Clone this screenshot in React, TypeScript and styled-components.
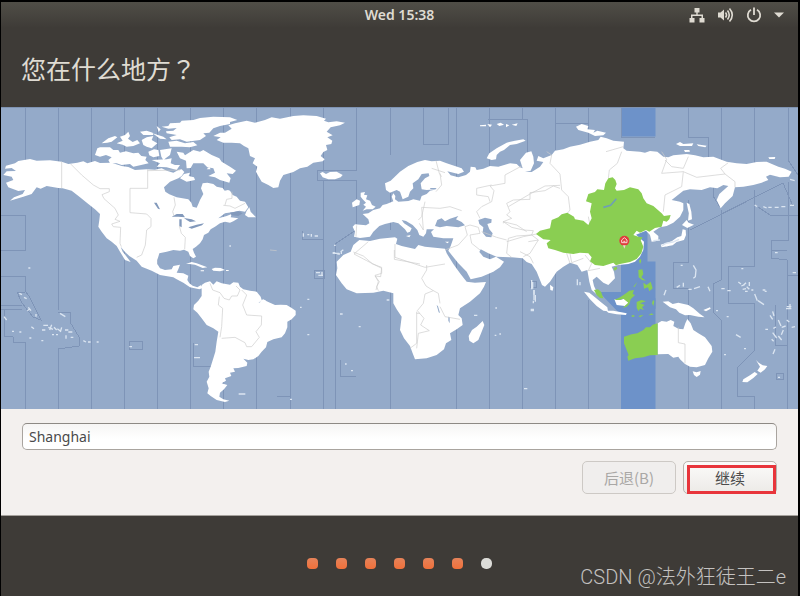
import React, { useState } from "react";
import styled, { createGlobalStyle } from "styled-components";

const GlobalStyle = createGlobalStyle`
  * { box-sizing: border-box; }
  body { margin: 0; background: #000; }
`;

const uiFont = `"Noto Sans", "Noto Sans CJK SC", sans-serif`;

const Screen = styled.div`
  min-height: 100vh;
  display: flex;
  flex-direction: column;
  border: solid #000;
  border-width: 2px 2px 0 1px;
  background: #3e3b37;
  font-family: ${uiFont};
`;

const TopBar = styled.header`
  display: grid;
  grid-template-columns: 1fr auto 1fr;
  align-items: center;
  height: 26px;
  padding: 0 14px;
  background: linear-gradient(#504e47, #3e3b37);
`;

const Clock = styled.time`
  grid-column: 2;
  color: #dfdbd2;
  font: 600 14px/20px ${uiFont};
`;

const Tray = styled.div`
  justify-self: end;
  display: flex;
  align-items: center;
  gap: 12px;
`;

const TrayButton = styled.button`
  display: flex;
  padding: 0;
  border: 0;
  background: none;
  color: #dfdbd2;
`;

const Header = styled.div`
  padding: 21px 20px 19px;
`;

const Title = styled.h1`
  margin: 0;
  color: #dfdbd2;
  font: 400 25px/39px "Noto Sans CJK SC", sans-serif;
`;

const CentredMark = styled.span`
  font-family: "Noto Sans CJK TC", sans-serif;
`;

const WorldMap = styled.svg`
  display: block;
  width: 100%;
  background: #94aac9;
`;

const Panel = styled.form`
  padding: 14px 21px 21px;
  background: #f3f0ee;
  border-bottom: 1px solid #a5a19c;
`;

const CityInput = styled.input`
  display: block;
  width: 100%;
  height: 27px;
  padding: 0 6px;
  border: 1px solid #a9a49f;
  border-top-color: #8d8984;
  border-radius: 5px;
  outline: 0;
  background: linear-gradient(#f6f5f4, #fff 60%);
  color: #4a4a4a;
  font: 400 14px/20px ${uiFont};
`;

const Actions = styled.div`
  display: flex;
  justify-content: flex-end;
  gap: 7px;
  margin-top: 11px;
`;

const ActionButton = styled.button<{ $marked?: boolean }>`
  position: relative;
  width: 94px;
  height: 33px;
  padding: 0;
  border: 1px solid ${(p) => (p.$marked ? "#b9b3ad" : "#cdc9c5")};
  border-radius: 5px;
  background: ${(p) => (p.$marked ? "linear-gradient(#fcfbfa, #eceae7)" : "#f0eeed")};
  color: ${(p) => (p.$marked ? "#4c4c4c" : "#a9a7a5")};
  font: 400 15px/22px "Noto Sans CJK SC", sans-serif;
`;

const Marker = styled.span`
  position: absolute;
  inset: 3px 0 -1px 3px;
  border: 3px solid #e8353b;
`;

const Footer = styled.footer`
  position: relative;
  flex: 1;
  min-height: 80px;
  padding-top: 42px;
`;

const Steps = styled.ol`
  display: flex;
  justify-content: center;
  gap: 18px;
  margin: 0;
  padding: 0;
  list-style: none;
`;

const Step = styled.li<{ $last: boolean }>`
  width: 11px;
  height: 11px;
  border-radius: ${(p) => (p.$last ? "5px" : "4px")};
  background: ${(p) => (p.$last ? "#dcdcd8" : "linear-gradient(#e5835a, #f0703a)")};
`;

const Watermark = styled.span`
  position: absolute;
  right: 12px;
  bottom: 4px;
  color: #c4c2c0;
  font: 300 20px/30px Roboto, "Noto Sans CJK SC", sans-serif;
`;

/* Each sheet of the map is drawn on a grid three times finer than the map itself. */
const west = "translate(0 100) scale(.33333)";
const south = "translate(150 250) scale(.33333)";
const north = "translate(200 100) scale(.33333)";
const centre = "translate(330 140) scale(.33333)";
const east = "translate(480 100) scale(.33333)";
const oceania = "translate(520 240) scale(.33333)";
const pacific = "translate(0 250) scale(.33333)";

const zoneLines =
  "M25 107V165M1 215H25V250H1M1 276H25V291L29 296L41 320L33 317L22 303L17 292H25M1 305H22M1 309H22M4 309V336L13 337V342H25V409M58 107V310M58 349V409M91 107V409M124 107V409M157 107V409M190 107V409M223 107V409M256 107V409M290 107V409M323 107V170M323 180V409M356 107V170H317V180H356V230L335 244V409M390 107V155M390 185V230M390 290V409M423 107V144H448V107M456 107V409M489 107V409M488 119H527V165M522 107V120M522 250V409M555 107V150M555 123H588V107M555 240V409M588 107V145M588 300V409M621 107V137H655M688 107V137H708V160M688 200V262H673V288H688V409M721 107V160M721 210V280L713 284V312L721 320V409M754 107V163M754 190V266H728V303H754V351L737 368V396H754V409M788 107V160L798 175M788 182V240H771V258L787 260V409M690 230L783 183L793 206M755 205L770 215H798M771 240V250H787M787 275H798M775 305V345H788M193 343V366H214M340 360V376H356M277 396H291M129 341H142V349H129ZM58 312H70V322L79 337V346L58 349M713 160V196L720 207M302 231V239H323M314 270H324V278H314ZM530 281H536V287H530ZM776 373H783V379H776Z";

const westLand = [
  "M18 197L45 190L55 183L90 177L110 182L150 181L185 185L205 192L232 188L250 184L262 190L285 183L300 189L335 188L365 198L385 201L405 210L440 208L465 209L485 205L500 212L520 218L535 210L545 208L553 216L545 228L535 235L510 245L492 262L496 275L508 283L530 292L565 298L574 308L578 320L590 323L596 310L600 300L610 282L603 265L608 250L622 248L640 252L650 260L668 264L674 272L684 270L690 272L698 285L710 290L720 302L735 305L745 322L735 335L718 332L700 336L675 340L655 355L680 348L695 342L692 352L715 355L700 364L690 368L675 365L660 370L645 380L632 388L625 398L612 405L608 418L600 430L588 440L578 447L582 458L588 470L580 475L570 468L565 455L552 449L540 452L520 450L500 455L478 460L472 480L472 492L480 505L495 510L515 508L520 498L540 494L535 508L530 518L550 520L565 527L562 540L568 550L578 557L592 562L602 556L610 563L598 568L570 562L550 548L530 538L520 532L480 525L455 512L425 500L410 482L388 468L375 456L362 440L368 455L380 470L392 486L375 480L360 455L350 438L335 425L320 415L305 395L295 380L298 360L300 342L285 328L265 312L240 292L215 272L188 265L175 264L140 258L122 266L110 262L95 282L70 290L30 302L42 292L68 282L75 270L55 273L25 262L18 248L40 240L35 230L10 225L20 214L48 213L35 204L15 206Z",
  "M285 165L292 145L300 142L330 142L340 150L355 150L360 158L378 154L400 160L415 158L424 168L440 170L436 180L446 190L420 196L400 200L390 192L365 195L350 190L330 190L325 180L335 172L318 165L300 170Z",
  "M305 130L325 115L345 108L352 112L335 125L322 128ZM350 130L368 122L360 110L375 105L385 95L390 108L384 116L398 126L412 120L420 130L400 138L380 140L368 134Z",
  "M485 80L505 78L510 70L540 68L545 62L580 60L600 54L640 50L690 52L712 60L690 66L690 72L660 78L640 85L628 98L610 100L618 108L600 120L560 125L540 118L515 120L508 112L530 105L500 100L498 94L520 92L530 84L505 86Z",
  "M470 78L482 88L476 96ZM505 125L530 122L555 130L580 126L592 136L570 142L545 140L510 140ZM420 95L440 92L458 98L460 105L430 105ZM425 120L440 112L460 108L455 120L472 130L455 145L440 140L430 135ZM458 100L490 110L500 118L480 116ZM445 155L462 148L475 150L478 168L460 172L448 166ZM480 150L515 145L510 165L490 180L484 170ZM455 180L500 178L515 175L512 190L525 195L540 195L530 210L500 202L470 200L480 190Z",
  "M530 155L550 158L555 166L580 150L600 155L610 150L635 165L658 175L665 185L690 200L708 212L698 222L680 220L692 235L688 248L660 240L645 232L625 228L645 218L640 205L622 202L610 190L580 190L572 204L560 205L558 182L540 175Z",
  "M540 235L552 222L570 218L566 228L582 232L585 240L560 245ZM620 208L628 200L632 208ZM735 345L740 332L748 322L752 335L768 352L745 352Z",
];

const southLand = [
  "M155 105L165 98L180 94L190 104L200 94L215 100L240 104L250 97L265 98L270 110L280 118L300 122L320 125L332 140L335 150L325 160L342 150L360 158L375 165L392 164L410 165L425 174L437 182L437 195L425 208L412 215L412 232L405 250L395 262L370 268L352 276L348 292L335 305L325 318L310 328L295 330L280 326L292 338L290 348L265 354L250 355L255 365L240 368L244 378L225 385L228 392L215 400L232 405L222 418L210 428L208 440L220 448L238 452L225 456L200 450L182 438L172 430L176 415L170 395L178 380L176 365L182 350L190 325L196 305L200 275L205 245L190 235L170 225L155 205L142 188L130 178L132 165L145 152L155 138Z",
  "M108 42L125 36L140 40L172 52L158 54L135 44L118 42ZM185 57L195 53L212 54L225 60L210 64L190 62ZM152 61h10v3h-10ZM228 60h8v3h-8ZM330 152l10 -4l8 4l-6 6h-10Z",
];

const northLand = [
  "M40 108L60 98L75 98L95 86L85 76L105 70L140 62L165 68L195 60L215 52L240 56L280 48L310 46L350 48L378 56L372 62L385 67L410 64L435 68L420 76L392 82L380 95L398 106L382 112L397 122L394 132L378 135L382 150L370 156L362 168L374 178L368 184L340 188L322 200L300 205L280 216L250 225L240 242L235 262L220 264L205 255L185 245L175 228L168 215L172 200L158 190L165 175L150 168L145 145L132 138L120 130L95 128L70 128L50 120L62 112Z",
  "M360 220L368 216L378 222L390 216L410 215L428 225L422 232L405 238L385 238L368 232Z",
  "M482 278L495 276L492 284L502 286L498 298L510 302L516 315L527 320L518 328L500 328L488 332L498 320L490 314L498 308L488 298L482 290ZM456 308L470 298L480 302L478 315L458 322Z",
];

const eurasia =
  "M72 290L75 275L68 260L75 253L108 256L118 250L115 238L98 222L115 220L130 210L150 205L158 195L170 192L190 184L185 170L190 160L196 168L195 178L205 185L235 183L250 178L270 182L275 168L290 162L300 152L320 148L290 150L275 148L272 130L285 115L298 108L296 100L275 102L265 118L248 130L250 145L240 155L235 170L218 178L210 155L200 150L180 158L168 150L165 130L182 122L210 95L235 78L262 66L285 60L305 64L330 62L350 70L395 85L402 95L385 102L352 94L362 106L385 112L408 105L420 95L422 80L436 82L440 90L460 86L480 78L505 80L540 70L560 72L570 82L578 85L570 60L588 38L604 34L610 50L612 70L602 92L585 95L605 96L630 80L640 66L620 62L625 48L640 55L665 45L675 32L700 28L720 20L750 14L780 5L805 0L812 -10L830 -5L850 2L882 5L880 25L890 32L930 35L945 38L960 33L982 35L1000 50L1015 52L1030 46L1070 42L1095 46L1120 52L1150 50L1170 58L1190 65L1220 70L1250 72L1280 66L1310 65L1345 80L1365 86L1385 95L1376 110L1350 112L1320 104L1308 110L1315 120L1295 128L1270 135L1240 140L1215 142L1208 168L1185 190L1172 205L1160 180L1168 162L1195 138L1180 135L1162 145L1140 142L1115 150L1080 148L1060 152L1025 180L1050 185L1060 190L1060 210L1050 230L1030 248L1010 258L990 262L970 275L985 288L985 302L965 305L960 285L948 272L918 284L942 305L940 330L930 350L915 365L895 372L865 375L845 380L852 395L855 415L835 435L820 428L800 410L788 420L792 438L806 468L785 450L778 425L772 390L755 395L742 375L720 368L700 380L680 395L660 425L645 440L636 435L620 395L605 372L590 366L578 355L545 352L500 350L475 340L452 328L448 336L460 350L480 358L498 350L522 365L510 382L490 395L455 410L422 418L410 395L385 370L365 345L355 332L362 318L370 295L340 295L310 290L303 276L312 268L290 268L288 280L280 290L268 285L262 270L248 255L228 243L215 240L222 250L245 265L240 275L232 278L225 268L205 250L190 246L165 252L148 258L130 275L120 290L90 294Z";

const centreLand = [
  eurasia,
  "M88 300L120 303L150 296L195 292L202 296L198 312L215 318L255 327L265 315L285 320L345 326L350 340L370 372L390 400L410 425L435 428L468 426L462 440L450 460L420 485L390 505L385 525L395 535L398 555L380 568L360 580L364 600L348 610L342 628L320 645L290 655L255 658L248 640L240 618L222 595L210 570L215 530L200 508L190 490L190 460L160 452L130 458L80 460L50 448L35 430L18 405L22 385L20 365L40 345L62 335L70 315Z",
  "M458 543L463 555L455 575L445 600L430 610L418 602L416 588L426 570L440 560ZM228 288L242 285L238 292ZM345 305h12l-4 5Z",
];

const eastLand = [
  "M20 175L28 160L50 145L80 128L105 122L130 118L137 122L110 132L90 135L72 150L60 155L50 165L48 178L35 180Z",
  "M288 80L305 72L325 78L322 88L345 90L340 98L352 92L378 98L370 106L345 108L325 98L295 90ZM588 132L600 126L610 132L640 130L636 138L600 138ZM650 133L680 137L676 142L655 138ZM612 150L628 150L630 155L615 156ZM865 172L886 171L884 177L868 177ZM0 76l18 -2v5H0ZM22 72l14 2l-6 8ZM50 72l12 -4l10 6l-14 4ZM78 72l10 4l-10 6ZM95 74l18 -4l-4 8Z",
  "M620 308L628 312L634 335L636 358L624 362L626 340ZM606 375L620 360L626 368L642 374L622 384ZM608 388L617 390L618 405L612 420L590 426L578 436L545 442L542 434L575 424L592 412L604 408ZM555 432l12 0l-6 8Z",
];

const oceaniaLand = [
  "M413 250L425 243L440 245L452 240L463 245L460 258L475 266L490 268L496 250L502 237L512 250L520 270L535 280L555 292L575 318L577 335L565 355L555 375L530 382L510 380L495 372L480 358L475 350L460 353L445 342L413 343Z",
  "M518 394L530 397L542 393L540 404L530 411L522 405ZM428 185L445 184L458 192L475 188L505 195L520 205L540 222L554 232L535 230L510 225L495 226L478 218L468 208L450 202L440 194ZM550 210l20 -8l2 4l-14 8ZM708 360L716 368L728 376L742 378L735 388L722 398L712 392L720 380ZM704 396L713 402L700 414L682 427L667 426L670 418L690 406Z",
  "M192 155L208 158L225 172L245 188L262 202L264 214L250 212L230 198L210 178ZM258 212L280 212L300 216L320 220L318 225L290 223L265 218ZM283 178L300 180L318 175L325 188L315 198L290 195ZM90 134L100 142L98 152L91 150Z",
];

const chinaZone =
  "M168 402L180 392L210 385L215 360L235 352L245 343L262 338L282 350L285 358L310 362L325 375L335 355L330 335L335 310L318 304L325 282L345 276L352 268L372 270L376 250L385 235L398 232L406 240L410 252L405 265L410 272L432 270L450 262L475 268L485 280L490 295L500 310L520 318L545 340L552 348L572 345L568 358L560 365L550 362L545 380L525 384L508 395L498 390L480 398L470 392L460 405L475 410L488 412L482 420L490 440L484 460L470 477L450 486L420 492L408 496L400 488L370 498L345 495L330 484L335 472L325 460L300 458L280 462L250 458L225 450L205 445L200 430L212 420L190 418Z";

const oceaniaGreen = [
  "M312 290L335 283L352 280L370 270L378 262L390 262L398 254L413 250V345L390 346L370 352L345 355L325 362L322 350L326 345L318 325L312 310Z",
  "M222 150L234 148L243 155L250 175L240 174L230 165ZM283 180L300 172L315 162L328 152L342 150L338 162L345 165L332 178L328 192L320 200L308 204L325 188L310 176L298 180ZM355 90L367 88L370 102L364 112L378 122L366 120L356 112ZM370 128L380 135L392 125L398 145L388 154L384 142L372 146ZM350 186L364 180L378 184L360 190L374 195L366 202L372 210L360 206L356 214L350 204ZM357 62l5 -6l2 8l-4 8ZM280 84l10 -4l2 6l-8 6ZM340 140l12 -14l-8 14ZM355 228l16 -4l-10 8ZM335 226l8 0v4h-8ZM385 226l10 -6l6 4ZM396 190l3 -10l4 4l-3 14Z",
];

const seas = [
  "M315 258L322 240L335 235L345 244L360 236L385 228L378 238L395 246L405 256L385 262L350 258L330 262Z",
  "M445 240L465 233L485 238L484 248L472 252L478 268L488 280L484 292L468 290L458 278L460 262L448 252Z",
  "M320 495l4 4l6 20l-4 -2ZM355 530l4 2v18l-4 -8ZM300 144l20 0l-4 4h-14Z",
];

const lakes =
  "M515 350L530 342L548 342L555 352L535 350ZM538 358L545 358L545 382L538 378ZM552 354L575 358L588 364L570 366L560 360ZM565 382L590 374L612 370L606 376L575 386ZM462 308L470 308L480 328L474 326ZM690 338L715 334L728 340L715 348L695 346Z";

const borders: [string, string][] = [
  [west, "M185 185V265M212 192L245 225L280 255L300 266L328 266V275L306 284L312 296L345 325L355 345L345 358L360 364L335 372L340 380L362 382L360 430L364 440M443 208V265H390V338L440 342L453 355V380L440 390L436 435L425 465L410 472M443 212L540 210M522 292L526 315L518 335L522 348M538 378L544 400L556 412L554 448M670 316L690 318L705 325L735 310M675 315L680 298L696 295V275"],
  [south, "M180 100L188 120L210 128L222 145L238 150L245 138L262 138L270 120L258 108M208 140L205 165L218 175L215 230L210 262M275 120L290 135L278 165L290 195L335 198L334 225L318 245L328 262L305 290L290 290L285 278L255 262L215 265M360 0L380 2M610 6L640 18L668 42L695 52L692 80L675 78L688 95L680 110L685 122M733 0V28L810 42M800 185V280L780 295M800 190h10"],
  [centre, "M80 256L78 290M115 305L72 342L110 362L155 385V400L135 406L145 425L138 450M195 312V352L285 382L345 372M290 375V390L275 415L288 438L310 452L325 460L330 490M310 452L285 462L280 490L262 512L282 535L272 555L298 572L265 580L260 625M330 500L345 530L390 538M265 240L275 230L285 185M268 250L280 270L275 202L330 205L360 200L395 212M330 100L335 135L318 155M318 62L328 100L335 110M305 85L345 98M345 330L385 315L412 285L405 260L420 255L445 262L450 280L420 285L425 310L450 330M575 78L525 105V130L480 138L492 152L485 185L455 200L440 215L450 235M440 145L485 135M440 145V165L475 170L480 185M520 245L545 262L580 270L610 272L605 285L560 288L535 295L530 340L545 352M530 190L550 180L600 178V158L645 152L670 138L690 145M530 190L540 215L530 225L545 235L520 245M520 245V250M455 275L500 292L530 300M605 285L625 300L600 340L580 350"],
  [east, "M200 155L215 165L210 190L240 222L245 270L265 290L270 330L262 340M330 375L325 350M378 155L430 140M385 235L388 210L412 190L425 155M85 320L150 282L195 258L240 256M545 155L560 178L545 220L610 215L605 260L555 285L550 335M555 180L575 200L610 205L625 170M610 215L650 232L735 222L765 245L765 262M735 222L722 205L745 188M80 425L130 410L170 402M70 365L110 375L140 395"],
  [oceania, "M475 262V308L495 312V370M150 40L155 68L190 55M195 45L215 70L205 92M205 92L240 85M0 35L30 50L40 70M25 5L55 0M140 40L150 70"],
];

const specks: [string, string][] = [
  [oceania, "M520 76L528 90L526 110L520 115M482 76h6M438 150l-6 16M470 142l10 -6M490 128v12M505 148h10M522 146l18 -6M564 140l6 14M604 146h10M622 152h10M655 126l8 6M664 138l10 -4M678 128l-8 8M688 126v12M668 148l10 -2M680 140l8 8M675 154h8M664 86h6M694 150h6M704 162l8 20M714 182l18 12M728 150h8M734 154h6M588 212h6M620 230h6M648 284l14 8M672 326h6M612 344h6M750 226l8 12M758 214l4 14M736 268h8M760 265l8 -4M775 240l8 18M785 262l12 -4M790 270l-6 14M758 278l12 16M755 298l6 6M775 288l10 12M800 240l8 6M815 262l10 -2M765 328l-6 14M800 200h14M810 192v14M798 206h16M774 412h6M765 38h8M818 98h10M38 126v20M42 150v14M46 165v20M32 208h10M12 446h10M172 118v18M180 126v10"],
  [oceania, "M400 2L420 0M425 18l12 -8l22 -4l18 -8"],
  [pacific, "M58 130l8 4M72 142l8 4M85 172l8 10M82 182l8 -6M108 200v-8M12 200l8 10M36 244h6M58 246h6M94 230l8 6M88 264h6M126 240h10M124 272h6M130 226h14M145 232l14 6M155 224l-6 16M162 232l8 8M172 236l10 8M185 232l-4 14M168 254h6M156 254h6M195 240h10M205 246h12M198 256v10M212 262h8M180 190l16 10M250 272l8 4M264 276h8M290 276h6M388 290h8M85 54h6"],
  [south, "M134 284h10M132 323h18M498 68h12M505 76h14M516 66v12M472 148h6M450 172h5M570 192h8M626 230h6M472 254h6M585 342h5M603 362h6M420 448h6M266 432h20M548 8h8M562 12h8M574 4v8M710 150h8"],
  [north, "M310 400v10M322 404h6M334 402v8M344 408h10M402 436h5M398 460h20M422 455l8 -6M88 438h5"],
  [centre, "M432 526h10M496 504h5M494 586h5M508 582h5M605 420v28M612 450v30M602 512h10M610 482v8"],
  [east, "M824 315l8 5M850 320l10 4M865 322h10M884 322h12M904 320h12M930 316h12M930 238l14 4"],
];

function Paths({ at, shapes, fill }: { at: string; shapes: string[]; fill: string }) {
  return (
    <g transform={at} fill={fill}>
      {shapes.map((d) => (
        <path key={d} d={d} />
      ))}
    </g>
  );
}

function Map() {
  return (
    <WorldMap viewBox="1 107 797 302" role="img" aria-label="Time zone map">
      <path d="M621 107H655.500V136.500H621ZM627 225H647.500V261.500H655.500V409H621V315L597 290V292H621V262Z" fill="#6d92c9" />
      <path d="M655.500 298l-7 5l7 6Z" fill="#6d92c9" />
      <path d={zoneLines} fill="none" stroke="#7e94b7" strokeWidth="1" shapeRendering="crispEdges" />
      <Paths at={west} shapes={westLand} fill="#fff" />
      <Paths at={south} shapes={southLand} fill="#fff" />
      <Paths at={north} shapes={northLand} fill="#fff" />
      <Paths at={centre} shapes={centreLand} fill="#fff" />
      <Paths at={east} shapes={eastLand} fill="#fff" />
      <Paths at={oceania} shapes={oceaniaLand} fill="#fff" />
      <Paths at={centre} shapes={seas} fill="#94aac9" />
      <Paths at={west} shapes={[lakes]} fill="#8299bb" />
      {borders.map(([at, d]) => (
        <path key={d} transform={at} d={d} fill="none" stroke="#cccccc" strokeWidth="2" />
      ))}
      {specks.map(([at, d]) => (
        <path key={d} transform={at} d={d} fill="none" stroke="#dbe5f1" strokeWidth="4" />
      ))}
      <Paths at={east} shapes={[chinaZone]} fill="#8ace52" />
      <Paths at={oceania} shapes={oceaniaGreen} fill="#8ace52" />
      <g transform={east}>
        <path d="M370 322L392 316L409 296" fill="none" stroke="#6f9fb5" strokeWidth="5" />
        <circle cx="433" cy="422" r="15" fill="#df3d3d" />
        <path d="M429 436h8l-4 10Z" fill="#f6d6d0" />
        <path d="M425 428V420L433 413L441 420V428Z" fill="none" stroke="#fbd5d5" strokeWidth="3" />
        <path d="M430 424h6" stroke="#fbd5d5" strokeWidth="3" />
      </g>
      <path d="M1 107.500H798" stroke="#7f93b2" strokeWidth="1" />
    </WorldMap>
  );
}

export default function App() {
  const [city, setCity] = useState("Shanghai");
  return (
    <>
      <GlobalStyle />
      <Screen>
        <TopBar>
          <Clock>Wed 15:38</Clock>
          <Tray>
            <TrayButton aria-label="Network">
              <svg width="16" height="16" viewBox="0 0 16 16" fill="currentColor">
                <path d="M5.500 1h5v4.500H8.700V7.500H14V11h1.500v4.500h-5V11h2V9h-9v2h2v4.500h-5V11H2V7.500h5.300v-2H5.500Z" />
              </svg>
            </TrayButton>
            <TrayButton aria-label="Volume">
              <svg width="17" height="16" viewBox="0 0 17 16" fill="none" stroke="currentColor" strokeWidth="1.600">
                <path d="M1 5.500h2.500L7 2.500v11l-3.500 -3H1Z" fill="currentColor" stroke="none" />
                <path d="M8.500 5.500q2 2.500 0 5M10.500 3.500q3.500 4.500 0 9M12.500 1.500q5.500 6.500 0 13" />
              </svg>
            </TrayButton>
            <TrayButton aria-label="Power">
              <svg width="16" height="16" viewBox="0 0 16 16" fill="none" stroke="currentColor" strokeWidth="1.800">
                <path d="M5 2.800A6.200 6.200 0 1 0 11 2.800M8 0.500V8" />
              </svg>
            </TrayButton>
            <TrayButton aria-label="System menu">
              <svg width="10" height="6" viewBox="0 0 10 6" fill="currentColor">
                <path d="M0 0.500H10L5 5.500Z" />
              </svg>
            </TrayButton>
          </Tray>
        </TopBar>
        <Header>
          <Title>
            您在什么地方<CentredMark>？</CentredMark>
          </Title>
        </Header>
        <Map />
        <Panel onSubmit={(e) => e.preventDefault()}>
          <CityInput aria-label="您在什么地方？" value={city} onChange={(e) => setCity(e.target.value)} />
          <Actions>
            <ActionButton type="button" disabled>
              后退(B)
            </ActionButton>
            <ActionButton type="submit" $marked>
              继续
              <Marker />
            </ActionButton>
          </Actions>
        </Panel>
        <Footer>
          <Steps>
            {[1, 2, 3, 4, 5, 6, 7].map((n) => (
              <Step key={n} $last={n === 7} />
            ))}
          </Steps>
          <Watermark>CSDN @法外狂徒王二e</Watermark>
        </Footer>
      </Screen>
    </>
  );
}
